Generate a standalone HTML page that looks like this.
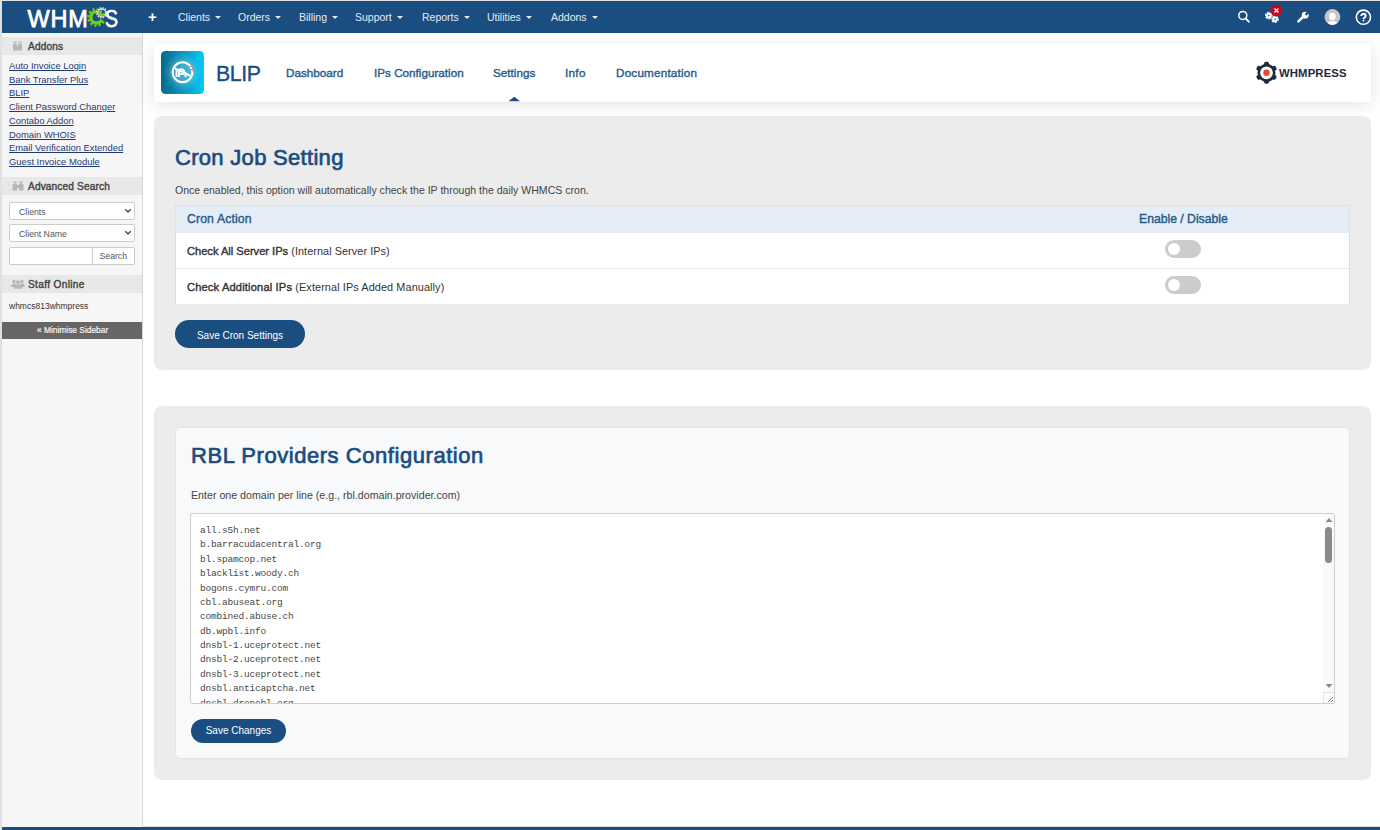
<!DOCTYPE html>
<html><head><meta charset="utf-8">
<style>
*{box-sizing:border-box;margin:0;padding:0}
html,body{width:1380px;height:830px;overflow:hidden;background:#fff;font-family:"Liberation Sans",sans-serif;color:#333}
.a{position:absolute;white-space:nowrap}
#frame{position:absolute;left:0;top:0;width:1380px;height:830px;background:#e0e0e0}
#nav{position:absolute;left:2px;top:1px;width:1378px;height:32px;background:#1a4d80}
#side{position:absolute;left:2px;top:33px;width:141px;height:797px;background:#f6f6f6;border-right:1px solid #d6d6d6}
#main{position:absolute;left:143px;top:33px;width:1237px;height:793px;background:#fff}
#footer{position:absolute;left:2px;top:827px;width:1378px;height:3px;background:#1a4d80}
.navi{position:absolute;top:9px;font-size:10.5px;line-height:14px;color:#e6ebf2;white-space:nowrap}
.caret{display:inline-block;width:0;height:0;border-left:3px solid transparent;border-right:3px solid transparent;border-top:3px solid #e6ebf2;vertical-align:2px;margin-left:5px}
.sh{position:absolute;left:0;width:140px;height:18px;background:#e8e8e8}
.sh span{position:absolute;left:26px;top:2.5px;font-size:10.1px;line-height:14px;color:#444;-webkit-text-stroke:0.4px #444;letter-spacing:0.15px;white-space:nowrap}
.sl{position:absolute;left:7px;font-size:9.4px;line-height:12px;color:#1f3b73;text-decoration:underline;white-space:nowrap}
.card{position:absolute;left:11px;width:1217px;background:#ececec;border-radius:8px}
.btn{position:absolute;background:#1a4d80;color:#fff;border-radius:14px;font-size:10px;text-align:center;white-space:nowrap}
.hn{position:absolute;top:67px;font-size:11.7px;line-height:13px;color:#2d5c8c;-webkit-text-stroke:0.4px #2d5c8c;white-space:nowrap}
.mono{font-family:"Liberation Mono",monospace;font-size:9.5px;letter-spacing:-0.2px;line-height:14.37px;color:#474747}
.tog{position:absolute;width:36px;height:18px;border-radius:9px;background:#cccccc}
.tog:after{content:"";position:absolute;left:3px;top:3px;width:12px;height:12px;border-radius:6px;background:#fff}
</style></head><body>
<div id="frame"></div>
<div id="nav">
  <div class="a" style="left:25.5px;top:5.5px;font-size:23.5px;line-height:24px;color:#fff;-webkit-text-stroke:0.75px #fff;letter-spacing:0.75px">WHM</div>
  <svg class="a" style="left:82px;top:4px" width="26" height="26" viewBox="0 0 26 26">
    <defs><mask id="cm"><rect width="26" height="26" fill="#fff"/><path d="M12.5 12.3 L21.5 16.5 L26 0 L13.5 0 Z" fill="#000"/></mask></defs>
    <g mask="url(#cm)" fill="none" stroke="#6fcf17">
      <circle cx="12.5" cy="12.3" r="5.7" stroke-width="3.4"/>
      <circle cx="12.5" cy="12.3" r="8.3" stroke-width="2.4" stroke-dasharray="2.17 2.17"/>
    </g>
    <g fill="none" stroke="#d9d9d9">
      <circle cx="17.7" cy="7.8" r="3.9" stroke-width="1.6"/>
      <circle cx="17.7" cy="7.8" r="5.1" stroke-width="1.6" stroke-dasharray="1.33 1.34"/>
    </g>
    <circle cx="17.9" cy="8.2" r="3.1" fill="#6fcf17"/>
    <path d="M17.9 8.2 L17.9 5.1 A3.1 3.1 0 0 1 21 8.2 Z" fill="#1a4d80"/>
  </svg>
  <div class="a" style="left:102.6px;top:5.5px;font-size:23.5px;line-height:24px;color:#fff;-webkit-text-stroke:0.75px #fff;transform:scaleX(0.84);transform-origin:left">S</div>
  <div class="a" style="left:146px;top:6px;font-size:15px;line-height:20px;font-weight:bold;color:#fff">+</div>
  <div class="navi" style="left:176px">Clients<span class="caret"></span></div>
  <div class="navi" style="left:236px">Orders<span class="caret"></span></div>
  <div class="navi" style="left:297px">Billing<span class="caret"></span></div>
  <div class="navi" style="left:353px">Support<span class="caret"></span></div>
  <div class="navi" style="left:420px">Reports<span class="caret"></span></div>
  <div class="navi" style="left:485px">Utilities<span class="caret"></span></div>
  <div class="navi" style="left:549px">Addons<span class="caret"></span></div>
  <!-- right icons -->
  <svg class="a" style="left:1234px;top:8px" width="20" height="18" viewBox="0 0 20 18"><circle cx="6.8" cy="6.4" r="4" fill="none" stroke="#fff" stroke-width="1.5"/><path d="M9.6 9.4 L12.8 12.7" stroke="#fff" stroke-width="1.9" stroke-linecap="round"/></svg>
  <svg class="a" style="left:1261px;top:2px" width="26" height="24" viewBox="0 0 26 24">
    <g fill="#fff"><circle cx="5.8" cy="12.6" r="2.9"/><circle cx="5.8" cy="12.6" r="3.3" fill="none" stroke="#fff" stroke-width="1.1" stroke-dasharray="1.5 1.95" stroke-linecap="round"/>
    <circle cx="12" cy="16.3" r="2.8"/><circle cx="12" cy="16.3" r="3.2" fill="none" stroke="#fff" stroke-width="1.1" stroke-dasharray="1.45 1.9" stroke-linecap="round"/></g>
    <circle cx="5.8" cy="12.6" r="0.8" fill="#1a4d80"/><circle cx="12" cy="16.3" r="0.8" fill="#1a4d80"/>
    <circle cx="13.4" cy="7.5" r="5.8" fill="#d0021b"/>
    <path d="M11.4 5.5 L15.4 9.5 M15.4 5.5 L11.4 9.5" stroke="#fff" stroke-width="1.3"/>
  </svg>
  <svg class="a" style="left:1294px;top:9px" width="16" height="16" viewBox="0 0 16 16"><path d="M2.4 11.3 L8 5.8" stroke="#fff" stroke-width="2.5" stroke-linecap="round"/><circle cx="9.2" cy="5.2" r="3.4" fill="#fff"/><path d="M8.77 4.07 L11.96 0.88 L13.52 2.44 L10.33 5.63Z" fill="#1a4d80"/></svg>
  <svg class="a" style="left:1320px;top:6px" width="22" height="22" viewBox="0 0 22 22"><defs><clipPath id="av"><circle cx="10.4" cy="10" r="7.9"/></clipPath></defs><circle cx="10.4" cy="10" r="7.9" fill="#c6c6c6"/><g clip-path="url(#av)" fill="#fff"><ellipse cx="10.4" cy="9.4" rx="3.3" ry="3.7"/><ellipse cx="10.4" cy="18.6" rx="6" ry="4.6"/></g></svg>
  <svg class="a" style="left:1351px;top:6px" width="22" height="22" viewBox="0 0 22 22"><circle cx="10.4" cy="10.2" r="7.1" fill="none" stroke="#fff" stroke-width="1.6"/><path d="M8.3 8.9 A2.15 2.15 0 1 1 11.6 10.7 Q10.5 11.2 10.5 12" fill="none" stroke="#fff" stroke-width="2"/><circle cx="10.5" cy="13.6" r="1" fill="#fff"/></svg>
</div>
<div id="side">
  <div class="sh" style="top:4px"><svg class="a" style="left:10px;top:4px" width="11" height="10" viewBox="0 0 11 10"><path d="M1 3 h3.6 v1.5 h1.8 v-1.5 h3.6 v6.5 h-9z M1.5 0.5 h3 v2 h-3z M6.5 0.5 h3 v2 h-3z" fill="#b8b8b8"/></svg><span>Addons</span></div>
  <div class="sl" style="top:27px">Auto Invoice Login</div>
  <div class="sl" style="top:41px">Bank Transfer Plus</div>
  <div class="sl" style="top:54px">BLIP</div>
  <div class="sl" style="top:68px">Client Password Changer</div>
  <div class="sl" style="top:82px">Contabo Addon</div>
  <div class="sl" style="top:96px">Domain WHOIS</div>
  <div class="sl" style="top:109px">Email Verification Extended</div>
  <div class="sl" style="top:123px">Guest Invoice Module</div>
  <div class="sh" style="top:144px"><svg class="a" style="left:10px;top:4px" width="12" height="10" viewBox="0 0 12 10"><path d="M1.5 0.5 h3 v2 h-3z M7.5 0.5 h3 v2 h-3z M0.5 3 h4.5 v6.5 h-4.5z M7 3 h4.5 v6.5 h-4.5z M4.5 4 h3 v3 h-3z" fill="#b8b8b8"/></svg><span>Advanced Search</span></div>
  <div class="a" style="left:7px;top:169px;width:126px;height:18px;background:#fff;border:1px solid #ccc;border-radius:2px"><span class="a" style="left:9px;top:4px;font-size:8.7px;line-height:11px;color:#555">Clients</span><svg class="a" style="right:2px;top:5px" width="8" height="6" viewBox="0 0 8 6"><path d="M1.3 1.3 L4 4 L6.7 1.3" fill="none" stroke="#444" stroke-width="1.4"/></svg></div>
  <div class="a" style="left:7px;top:191px;width:126px;height:18px;background:#fff;border:1px solid #ccc;border-radius:2px"><span class="a" style="left:9px;top:4px;font-size:8.7px;line-height:11px;color:#555">Client Name</span><svg class="a" style="right:2px;top:5px" width="8" height="6" viewBox="0 0 8 6"><path d="M1.3 1.3 L4 4 L6.7 1.3" fill="none" stroke="#444" stroke-width="1.4"/></svg></div>
  <div class="a" style="left:7px;top:214px;width:126px;height:18px;background:#fff;border:1px solid #ccc;border-radius:2px"><div class="a" style="left:82px;top:0;width:1px;height:16px;background:#ccc"></div><span class="a" style="left:89.5px;top:3px;font-size:8.7px;line-height:11px;color:#555">Search</span></div>
  <div class="sh" style="top:242px"><svg class="a" style="left:9px;top:4px" width="14" height="10" viewBox="0 0 14 10"><g fill="#b8b8b8"><circle cx="3" cy="2.5" r="1.7"/><circle cx="11" cy="2.5" r="1.7"/><circle cx="7" cy="3.2" r="2"/><path d="M0 8 q0-3.5 3-3.5 q3 0 3 3.5z M8 8 q0-3.5 3-3.5 q3 0 3 3.5z M2.8 9.8 q0-4.3 4.2-4.3 q4.2 0 4.2 4.3z"/></g></svg><span style="letter-spacing:0.35px">Staff Online</span></div>
  <div class="a" style="left:7px;top:268px;font-size:8.5px;line-height:11px;color:#333">whmcs813whmpress</div>
  <div class="a" style="left:0;top:289px;width:140px;height:17px;background:#666"><span class="a" style="left:35px;top:3px;font-size:8.4px;line-height:11px;color:#f4f4f4;-webkit-text-stroke:0.2px #f4f4f4">« Minimise Sidebar</span></div>
</div>
<div id="main">
  <!-- header -->
  <div class="a" style="left:11px;top:11px;width:1217px;height:58px;background:#fff;box-shadow:0 3px 16px rgba(0,0,0,0.11)"></div>
  <svg class="a" style="left:18px;top:18px" width="43" height="43" viewBox="0 0 43 43">
    <defs><linearGradient id="ig" x1="0" x2="1" y1="0" y2="0"><stop offset="0" stop-color="#08698a"/><stop offset="0.55" stop-color="#0b9cc6"/><stop offset="1" stop-color="#00c9f7"/></linearGradient></defs>
    <rect width="43" height="43" rx="4.5" fill="url(#ig)"/>
    <circle cx="21.5" cy="21.2" r="17.5" fill="#fff" fill-opacity="0.07"/>
    <circle cx="21.5" cy="21.2" r="13.8" fill="#fff" fill-opacity="0.1"/>
    <circle cx="21.5" cy="21.2" r="10" fill="#fff" fill-opacity="0.06"/>
    <circle cx="21.5" cy="21.2" r="9.9" fill="none" stroke="#fff" stroke-width="2.1"/>
    <path d="M15.5 18.5 v7.5 M18 18.5 v7.5 M18 18.5 h3 a2.3 2.3 0 0 1 0 4.6 h-3 M24.5 21 v5" stroke="#fff" stroke-width="1.9" fill="none"/>
    <path d="M12.8 16.8 L29.5 24.8" stroke="#fff" stroke-width="2"/>
    <circle cx="30" cy="17" r="1.7" fill="#fff" stroke="#f0705f" stroke-width="0.9"/><path d="M31 18.3 L33 20.6" stroke="#f0705f" stroke-width="1.2"/>
  </svg>
  <div class="a" style="left:73px;top:28.5px;font-size:21.3px;line-height:24px;color:#1a4d80;letter-spacing:-0.4px;-webkit-text-stroke:0.35px #1a4d80">BLIP</div>
  <div class="hn" style="left:143px;top:32.5px">Dashboard</div>
  <div class="hn" style="left:231px;top:32.5px">IPs Configuration</div>
  <div class="hn" style="left:350px;top:32.5px">Settings</div>
  <div class="hn" style="left:422px;top:32.5px;letter-spacing:0.3px">Info</div>
  <div class="hn" style="left:473px;top:32.5px;letter-spacing:0.2px">Documentation</div>
  <svg class="a" style="left:365px;top:63px" width="12" height="6" viewBox="0 0 12 6"><path d="M0.4 5.3 L6.3 0.8 L12 5.3Z" fill="#1a4d80"/></svg>
  <svg class="a" style="left:1112px;top:28px" width="23" height="23" viewBox="0 0 23 23">
    <g fill="#1c2b3b"><circle cx="11.5" cy="11.8" r="9"/>
    <g transform="translate(11.5 11.8)"><rect x="-2.5" y="-11" width="5" height="22" rx="2"/><rect x="-2.5" y="-11" width="5" height="22" rx="2" transform="rotate(60)"/><rect x="-2.5" y="-11" width="5" height="22" rx="2" transform="rotate(120)"/></g></g>
    <circle cx="11.5" cy="11.8" r="6.4" fill="#fff"/><circle cx="11.5" cy="11.8" r="3.2" fill="#e8452b"/>
  </svg>
  <div class="a" style="left:1136px;top:33px;font-size:11.3px;line-height:14px;font-weight:bold;color:#1c2b3b;letter-spacing:0.15px">WHMPRESS</div>

  <!-- cron card -->
  <div class="card" style="top:83px;height:254px"></div>
  <div class="a" style="left:32px;top:112px;font-size:22px;line-height:26px;color:#1a4d80;-webkit-text-stroke:0.7px #1a4d80;letter-spacing:0.3px">Cron Job Setting</div>
  <div class="a" style="left:32px;top:151px;font-size:10.55px;line-height:13px;color:#444">Once enabled, this option will automatically check the IP through the daily WHMCS cron.</div>
  <div class="a" style="left:32px;top:172px;width:1175px;height:99px;background:#fff;border-left:1px solid #dedede;border-right:1px solid #dedede">
    <div class="a" style="left:-1px;top:0;width:1175px;height:28px;background:#e5edf6;border:1px solid #dde2e8;border-bottom:none"></div>
    <div class="a" style="left:11px;top:7px;font-size:12.2px;line-height:14px;color:#2a5a8a;-webkit-text-stroke:0.4px #2a5a8a;letter-spacing:0.15px">Cron Action</div>
    <div class="a" style="left:963px;top:7px;font-size:12.2px;line-height:14px;color:#2a5a8a;-webkit-text-stroke:0.4px #2a5a8a">Enable / Disable</div>
    <div class="a" style="left:0;top:63px;width:1173px;height:1px;background:#ececec"></div>
    <div class="a" style="left:11px;top:39px;font-size:10.9px;line-height:14px;color:#333"><b style="font-weight:normal;font-size:11.1px;-webkit-text-stroke:0.4px #333">Check All Server IPs</b><span style="letter-spacing:0.05px"> (Internal Server IPs)</span></div>
    <div class="a" style="left:11px;top:75px;font-size:10.9px;line-height:14px;color:#333"><b style="font-weight:normal;font-size:11.1px;-webkit-text-stroke:0.4px #333;letter-spacing:0.17px">Check Additional IPs</b><span style="letter-spacing:0.09px"> (External IPs Added Manually)</span></div>
    <div class="tog" style="left:989px;top:35px"></div>
    <div class="tog" style="left:989px;top:71px"></div>
  </div>
  <div class="btn" style="left:32px;top:287px;width:130px;height:28px;line-height:29px;padding-top:1px">Save Cron Settings</div>

  <!-- rbl card -->
  <div class="card" style="top:373px;height:374px"></div>
  <div class="a" style="left:32px;top:394px;width:1175px;height:332px;background:#f8f9fa;border:1px solid #e2e4e6;border-radius:5px"></div>
  <div class="a" style="left:48px;top:410px;font-size:22px;line-height:26px;color:#1a4d80;-webkit-text-stroke:0.7px #1a4d80;letter-spacing:0.55px">RBL Providers Configuration</div>
  <div class="a" style="left:48px;top:456px;font-size:10.65px;line-height:13px;color:#444">Enter one domain per line (e.g., rbl.domain.provider.com)</div>
  <div class="a" style="left:47px;top:480px;width:1145px;height:191px;background:#fff;border:1px solid #cfcfcf;border-radius:2px;overflow:hidden">
    <div class="a mono" style="left:9px;top:10px">all.s5h.net<br>b.barracudacentral.org<br>bl.spamcop.net<br>blacklist.woody.ch<br>bogons.cymru.com<br>cbl.abuseat.org<br>combined.abuse.ch<br>db.wpbl.info<br>dnsbl-1.uceprotect.net<br>dnsbl-2.uceprotect.net<br>dnsbl-3.uceprotect.net<br>dnsbl.anticaptcha.net<br>dnsbl.dronebl.org<br>dnsbl.inps.de</div>
    <div class="a" style="left:1132px;top:0;width:11px;height:189px;background:#fafafa"></div>
    <svg class="a" style="left:1134px;top:3px" width="8" height="6" viewBox="0 0 8 6"><path d="M0.5 5 L4 1 L7.5 5Z" fill="#8a8a8a"/></svg>
    <div class="a" style="left:1134px;top:13px;width:7px;height:36px;border-radius:3.5px;background:#8a8a8a"></div>
    <svg class="a" style="left:1134px;top:169px" width="8" height="6" viewBox="0 0 8 6"><path d="M0.5 1 L4 5 L7.5 1Z" fill="#8a8a8a"/></svg>
    <div class="a" style="left:1132px;top:178px;width:11px;height:11px;background:#fafafa;border-top:1px solid #e4e4e4;border-left:1px solid #e4e4e4"></div>
    <svg class="a" style="left:1134px;top:180px" width="9" height="9" viewBox="0 0 9 9"><path d="M8 3 L3 8 M8 6 L6 8" stroke="#777" stroke-width="0.9"/></svg>
  </div>
  <div class="btn" style="left:48px;top:686px;width:95px;height:24px;line-height:24px;border-radius:12px">Save Changes</div>
</div>
<div id="footer"></div>
</body></html>
